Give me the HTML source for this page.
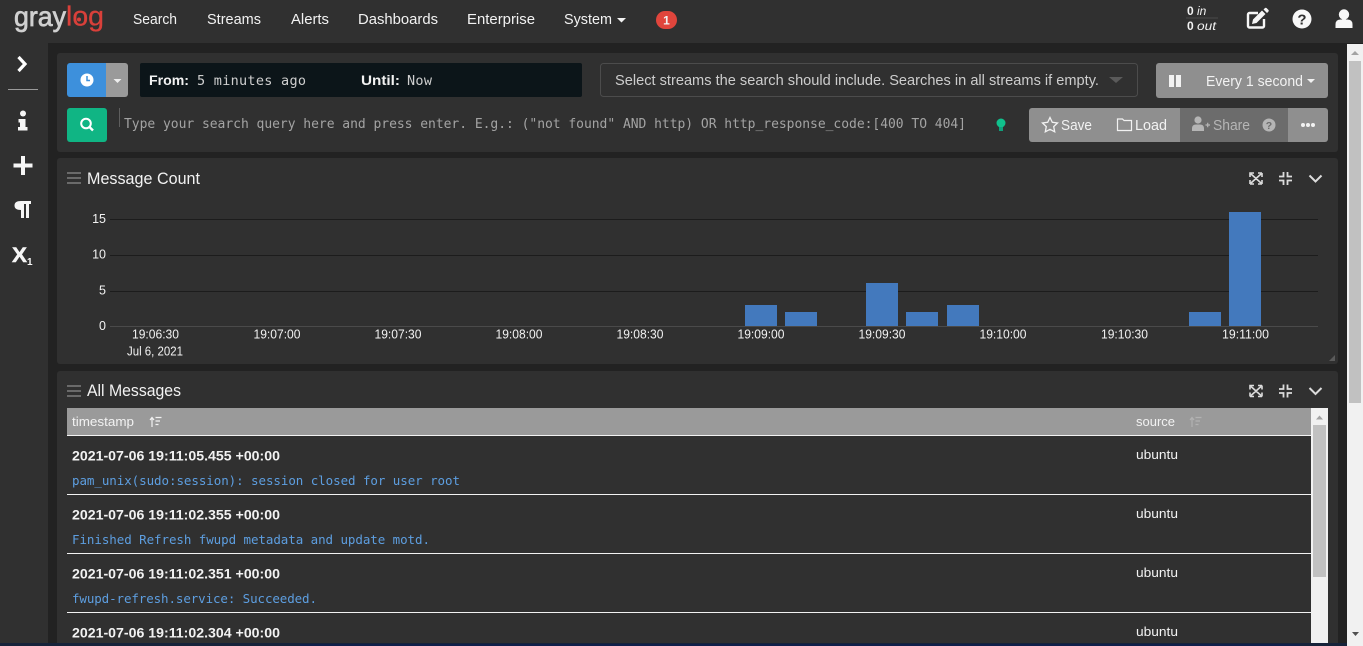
<!DOCTYPE html>
<html><head><meta charset="utf-8"><title>Graylog</title>
<style>
html,body{margin:0;padding:0;background:#222;overflow:hidden;width:1363px;height:646px}
svg{display:block}
text{font-family:"Liberation Sans",sans-serif;fill:#f2f2f2}
.m{font-family:"DejaVu Sans Mono","Liberation Mono",monospace}
</style></head><body>
<svg width="1363" height="646" viewBox="0 0 1363 646" xmlns="http://www.w3.org/2000/svg">
<rect width="1363" height="646" fill="#222"/>
<!-- nav -->
<rect width="1363" height="43" fill="#303030"/>
<rect y="43" width="48" height="603" fill="#303030"/>
<text x="14" y="26" font-size="28" textLength="52" lengthAdjust="spacingAndGlyphs" style="fill:#d0d0d0;stroke:#d0d0d0;stroke-width:.7">gray</text>
<text x="66" y="25.500" font-size="28" textLength="38" lengthAdjust="spacingAndGlyphs" style="fill:#d9403a;stroke:#d9403a;stroke-width:.3">log</text>
<circle cx="79" cy="19.500" r="2" fill="#d9403a"/>
<g font-size="14.500">
<text x="133" y="24" textLength="44" lengthAdjust="spacingAndGlyphs">Search</text>
<text x="207" y="24" textLength="54" lengthAdjust="spacingAndGlyphs">Streams</text>
<text x="291" y="24" textLength="38" lengthAdjust="spacingAndGlyphs">Alerts</text>
<text x="358" y="24" textLength="80" lengthAdjust="spacingAndGlyphs">Dashboards</text>
<text x="467" y="24" textLength="68" lengthAdjust="spacingAndGlyphs">Enterprise</text>
<text x="564" y="24" textLength="48" lengthAdjust="spacingAndGlyphs">System</text>
</g>
<path d="M617 18h9l-4.500 4.500z" fill="#f2f2f2"/>
<rect x="656" y="11" width="21" height="18" rx="9" fill="#e0453c"/>
<text x="666.500" y="24.500" font-size="12" font-weight="bold" text-anchor="middle">1</text>
<g font-size="12">
<text x="1187" y="15" font-weight="bold">0</text><text x="1197" y="15" font-style="italic">in</text>
<text x="1187" y="30" font-weight="bold">0</text><text x="1197" y="30" font-style="italic" textLength="19" lengthAdjust="spacingAndGlyphs">out</text>
</g>
<rect x="1186" y="17.500" width="32" height="1" fill="#4a4a4a"/>
<!-- top right icons -->
<path d="M1258 13h-8.500a1.500 1.500 0 0 0-1.500 1.500v11.500a1.500 1.500 0 0 0 1.500 1.500h13a1.500 1.500 0 0 0 1.500-1.500v-7" fill="none" stroke="#f6f6f6" stroke-width="2.400"/>
<path d="M1253 19.500l9-9 3.500 3.500-9 9-4.500 1zM1263.500 9.500l1.500-1.500q.8-.6 1.500 0l2 2q.6.7 0 1.500l-1.500 1.500z" fill="#f6f6f6"/>
<circle cx="1302" cy="19" r="9.500" fill="#f8f8f8"/>
<text x="1302" y="24.500" font-size="15" font-weight="bold" text-anchor="middle" style="fill:#303030">?</text>
<circle cx="1344" cy="14.500" r="5.200" fill="#f8f8f8"/>
<path d="M1335.500 28v-3.500q0-5 5-5h7q5 0 5 5v3.500z" fill="#f8f8f8"/>
<!-- sidebar -->
<path d="M18.500 57l6.500 7-6.500 7" fill="none" stroke="#fff" stroke-width="3.200"/>
<rect x="8" y="89" width="30" height="1" fill="#9a9a9a"/>
<circle cx="23" cy="113.500" r="3" fill="#f6f6f6"/>
<path d="M18.500 119h7v8h2v3.500h-9.500v-3.500h2v-4.500h-1.500z" fill="#f6f6f6"/>
<path d="M21 156h4v7.500h7.500v4h-7.500v7.500h-4v-7.500h-7.500v-4h7.500z" fill="#f6f6f6"/>
<path d="M31 201v3h-2v14h-3v-14h-2v14h-3v-8q-6.500 0-6.500-4.500 0-4.500 6.500-4.500z" fill="#f6f6f6"/>
<text x="12" y="262" font-size="21" font-weight="bold" textLength="15" lengthAdjust="spacingAndGlyphs" style="fill:#f6f6f6;stroke:#f6f6f6;stroke-width:.5">X</text>
<text x="27" y="265" font-size="10" font-weight="bold" style="fill:#f6f6f6">1</text>
<!-- panels -->
<rect x="57" y="53" width="1281" height="99" rx="3" fill="#303030"/>
<rect x="57" y="158" width="1281" height="206" rx="3" fill="#303030"/>
<rect x="57" y="371" width="1281" height="275" rx="3" fill="#303030"/>
<!-- search bar -->
<path d="M70 63h36v34h-36a3 3 0 0 1-3-3v-28a3 3 0 0 1 3-3z" fill="#3d90dc"/>
<path d="M106 63h19a3 3 0 0 1 3 3v28a3 3 0 0 1-3 3h-19z" fill="#9a9a9a"/>
<circle cx="87" cy="80" r="6.500" fill="#fff"/><path d="M87 76v4.500h3" fill="none" stroke="#3d90dc" stroke-width="1.500"/>
<path d="M113.500 79h8l-4 4z" fill="#eee"/>
<rect x="140" y="63" width="442" height="34" rx="2" fill="#0c1519"/>
<text x="149" y="85" font-size="14" font-weight="bold" textLength="40" lengthAdjust="spacingAndGlyphs">From:</text>
<text class="m" x="197" y="85" font-size="13.500" textLength="109" style="fill:#cfcfcf">5 minutes ago</text>
<text x="361" y="85" font-size="14" font-weight="bold" textLength="39" lengthAdjust="spacingAndGlyphs">Until:</text>
<text class="m" x="407" y="85" font-size="13.500" textLength="25" style="fill:#cfcfcf">Now</text>
<rect x="600.500" y="63.500" width="537" height="33" rx="3" fill="#303030" stroke="#4c4c4c"/>
<text x="615" y="85" font-size="14.500" textLength="484" lengthAdjust="spacingAndGlyphs" style="fill:#cdcdcd">Select streams the search should include. Searches in all streams if empty.</text>
<path d="M1109 77h14l-7 6z" fill="#5a5a5a"/>
<rect x="1156" y="63" width="172" height="35" rx="3" fill="#8f8f8f"/>
<rect x="1169" y="75" width="5" height="12" fill="#f2f2f2"/><rect x="1176" y="75" width="5" height="12" fill="#f2f2f2"/>
<text x="1206" y="86" font-size="14.500" textLength="97" lengthAdjust="spacingAndGlyphs">Every 1 second</text>
<path d="M1307 79h8l-4 4z" fill="#f2f2f2"/>
<rect x="67" y="108" width="40" height="34" rx="3" fill="#10b584"/>
<circle cx="86" cy="123.500" r="4.800" fill="none" stroke="#fff" stroke-width="2"/><path d="M89.500 127l3.500 3.500" stroke="#fff" stroke-width="2.400"/>
<rect x="119" y="108" width="1" height="19" fill="#5e5e5e"/>
<text class="m" x="124" y="128" font-size="13" textLength="842" style="fill:#a3a3a3">Type your search query here and press enter. E.g.: ("not found" AND http) OR http_response_code:[400 TO 404]</text>
<circle cx="1001" cy="123" r="4.500" fill="#10c08c"/><rect x="999" y="127" width="4" height="4" fill="#10a07c"/>
<rect x="1029" y="108" width="299" height="34" rx="3" fill="#8f8f8f"/>
<rect x="1180" y="108" width="108" height="34" fill="#6c6c6c"/>
<path d="M1050 117.500l2.300 4.800 5.200.7-3.800 3.600 1 5.200-4.700-2.500-4.700 2.500 1-5.200-3.800-3.600 5.200-.7z" fill="none" stroke="#f2f2f2" stroke-width="1.300"/>
<text x="1061" y="130" font-size="14.500" textLength="31" lengthAdjust="spacingAndGlyphs">Save</text>
<path d="M1117.500 130.500v-11.500h5l1.500 1.500h7.500v10z" fill="none" stroke="#f2f2f2" stroke-width="1.200"/>
<text x="1135" y="130" font-size="14.500" textLength="32" lengthAdjust="spacingAndGlyphs">Load</text>
<circle cx="1198" cy="120" r="3.600" fill="#b5b5b5"/><path d="M1192 131v-2.500q0-4 4-4h4q4 0 4 4v2.500z" fill="#b5b5b5"/><path d="M1205.500 125h4.500M1207.700 122.700v4.600" stroke="#b5b5b5" stroke-width="1.200"/>
<text x="1213" y="130" font-size="14.500" textLength="37" lengthAdjust="spacingAndGlyphs" style="fill:#b5b5b5">Share</text>
<circle cx="1269" cy="125" r="6.500" fill="#b5b5b5"/><text x="1269" y="129" font-size="10.500" font-weight="bold" text-anchor="middle" style="fill:#6c6c6c">?</text>
<circle cx="1303" cy="125" r="2" fill="#f2f2f2"/><circle cx="1308" cy="125" r="2" fill="#f2f2f2"/><circle cx="1313" cy="125" r="2" fill="#f2f2f2"/>
<!-- message count -->
<g fill="#6a6a6a"><rect x="67" y="172" width="14" height="2"/><rect x="67" y="177" width="14" height="2"/><rect x="67" y="182" width="14" height="2"/></g>
<text x="87" y="184" font-size="17" textLength="113" lengthAdjust="spacingAndGlyphs">Message Count</text>
<g id="wc" fill="none" stroke="#dcdcdc">
<path d="M1250 173h4l-4 0v4M1262 173h-4M1262 173v4M1250 184h4M1250 184v-4M1262 184h-4M1262 184v-4M1251 174l10 9M1261 174l-10 9" stroke-width="1.600"/>
<path d="M1283.500 172v4.500h-4.500M1287.500 172v4.500h4.500M1283.500 185v-4.500h-4.500M1287.500 185v-4.500h4.500" stroke-width="1.800"/>
<path d="M1309.500 175.500l6 6 6-6" stroke-width="2"/>
</g>
<use href="#wc" y="212.500"/>
<g fill="#1c1c1c"><rect x="110" y="219" width="1208" height="1"/><rect x="110" y="255" width="1208" height="1"/><rect x="110" y="291" width="1208" height="1"/></g>
<rect x="110" y="326" width="1208" height="1" fill="#4a4a4a"/>
<g font-size="12.500" text-anchor="end">
<text x="106" y="223">15</text><text x="106" y="258.500">10</text><text x="106" y="294.500">5</text><text x="106" y="330">0</text>
</g>
<g fill="#4379bd">
<rect x="745" y="305" width="32" height="21"/><rect x="785" y="312" width="32" height="14"/>
<rect x="866" y="283" width="32" height="43"/><rect x="906" y="312" width="32" height="14"/>
<rect x="947" y="305" width="32" height="21"/><rect x="1189" y="312" width="32" height="14"/>
<rect x="1229" y="212" width="32" height="114"/>
</g>
<g font-size="12.500" text-anchor="middle">
<text x="155.500" y="338.500" textLength="47" lengthAdjust="spacingAndGlyphs">19:06:30</text>
<text x="277" y="338.500" textLength="47" lengthAdjust="spacingAndGlyphs">19:07:00</text>
<text x="398" y="338.500" textLength="47" lengthAdjust="spacingAndGlyphs">19:07:30</text>
<text x="519" y="338.500" textLength="47" lengthAdjust="spacingAndGlyphs">19:08:00</text>
<text x="640" y="338.500" textLength="47" lengthAdjust="spacingAndGlyphs">19:08:30</text>
<text x="761" y="338.500" textLength="47" lengthAdjust="spacingAndGlyphs">19:09:00</text>
<text x="882" y="338.500" textLength="47" lengthAdjust="spacingAndGlyphs">19:09:30</text>
<text x="1003" y="338.500" textLength="47" lengthAdjust="spacingAndGlyphs">19:10:00</text>
<text x="1124.500" y="338.500" textLength="47" lengthAdjust="spacingAndGlyphs">19:10:30</text>
<text x="1245.500" y="338.500" textLength="47" lengthAdjust="spacingAndGlyphs">19:11:00</text>
<text x="155" y="355.500" textLength="56" lengthAdjust="spacingAndGlyphs">Jul 6, 2021</text>
</g>
<path d="M1335 355v6h-6z" fill="#5a5a5a"/>
<!-- all messages -->
<g fill="#6a6a6a"><rect x="67" y="385" width="14" height="2"/><rect x="67" y="390" width="14" height="2"/><rect x="67" y="395" width="14" height="2"/></g>
<text x="87" y="396" font-size="17" textLength="94" lengthAdjust="spacingAndGlyphs">All Messages</text>
<rect x="67" y="408" width="1244" height="27" fill="#9a9a9a"/>
<rect x="67" y="435" width="1244" height="1" fill="#f2f2f2"/>
<rect x="67" y="494" width="1244" height="1" fill="#f2f2f2"/>
<rect x="67" y="553" width="1244" height="1" fill="#f2f2f2"/>
<rect x="67" y="612" width="1244" height="1" fill="#f2f2f2"/>
<text x="72" y="426" font-size="12.500" textLength="62" lengthAdjust="spacingAndGlyphs">timestamp</text>
<path d="M152 427v-9M150 420l2-2.500 2 2.500M155.500 417.500h6M155.500 421h4.500M155.500 424.500h3" stroke="#f2f2f2" stroke-width="1.200" fill="none"/>
<text x="1136" y="426" font-size="12.500" textLength="39" lengthAdjust="spacingAndGlyphs">source</text>
<path d="M1192 427v-9M1190 420l2-2.500 2 2.500M1195.500 417.500h6M1195.500 421h4.500M1195.500 424.500h3" stroke="#b2b2b2" stroke-width="1.200" fill="none"/>
<g font-size="13.500" font-weight="bold">
<text x="72" y="460.500" textLength="208" lengthAdjust="spacingAndGlyphs">2021-07-06 19:11:05.455 +00:00</text>
<text x="72" y="519.500" textLength="208" lengthAdjust="spacingAndGlyphs">2021-07-06 19:11:02.355 +00:00</text>
<text x="72" y="578.500" textLength="208" lengthAdjust="spacingAndGlyphs">2021-07-06 19:11:02.351 +00:00</text>
<text x="72" y="637.500" textLength="208" lengthAdjust="spacingAndGlyphs">2021-07-06 19:11:02.304 +00:00</text>
</g>
<g font-size="12.500">
<text class="m" x="72" y="485" textLength="388" style="fill:#5d9ee0">pam_unix(sudo:session): session closed for user root</text>
<text class="m" x="72" y="544" textLength="358" style="fill:#5d9ee0">Finished Refresh fwupd metadata and update motd.</text>
<text class="m" x="72" y="603" textLength="245" style="fill:#5d9ee0">fwupd-refresh.service: Succeeded.</text>
</g>
<g font-size="13">
<text x="1136" y="459" textLength="42" lengthAdjust="spacingAndGlyphs">ubuntu</text>
<text x="1136" y="518" textLength="42" lengthAdjust="spacingAndGlyphs">ubuntu</text>
<text x="1136" y="577" textLength="42" lengthAdjust="spacingAndGlyphs">ubuntu</text>
<text x="1136" y="636" textLength="42" lengthAdjust="spacingAndGlyphs">ubuntu</text>
</g>
<!-- inner scrollbar -->
<rect x="1311" y="408" width="17" height="235" fill="#f1f1f1"/>
<rect x="1313" y="425" width="13" height="152" fill="#c1c1c1"/>
<path d="M1316 419.500h7l-3.500-4z" fill="#a3a3a3"/>
<!-- page scrollbar -->
<rect x="1347" y="44" width="16" height="602" fill="#f1f1f1"/>
<rect x="1349" y="61" width="12" height="342" fill="#c1c1c1"/>
<path d="M1351 55h8l-4-4z" fill="#a3a3a3"/>
<path d="M1352 632h7l-3.500 4z" fill="#505050"/>
<rect y="643" width="1347" height="3" fill="#16233a"/>
<rect x="300" y="644" width="1000" height="2" fill="#0f1f4a"/>
</svg>
</body></html>
